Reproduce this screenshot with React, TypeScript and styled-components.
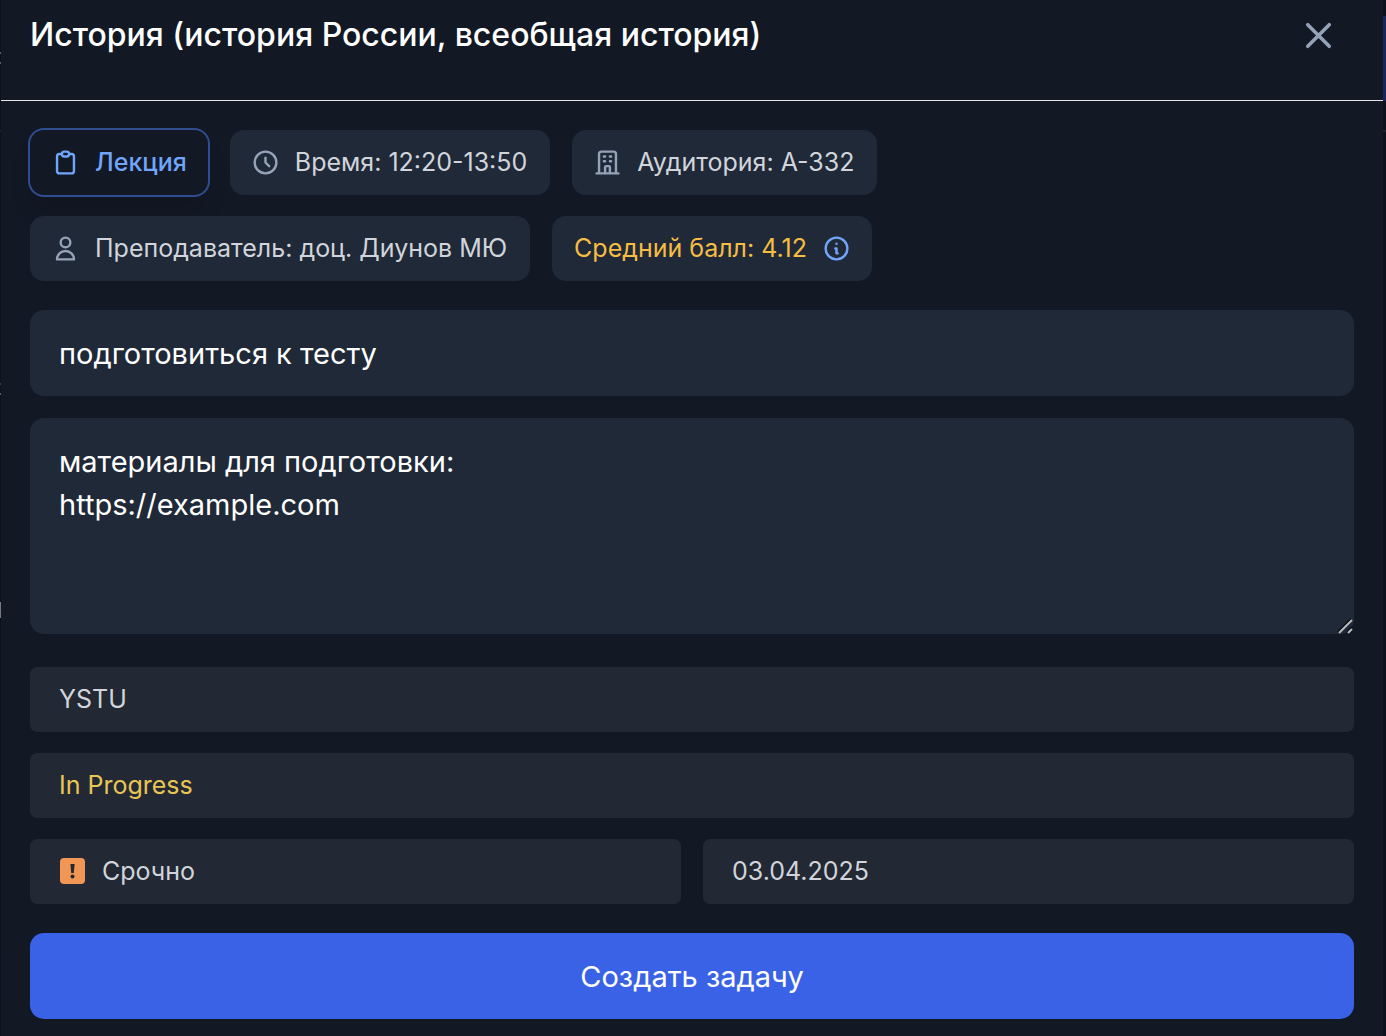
import React, { useState } from "react";
import styled, { createGlobalStyle } from "styled-components";

const GlobalStyle = createGlobalStyle`
  *, *::before, *::after { box-sizing: border-box; }
  body {
    margin: 0;
    background: #0d1119;
    color: #fff;
    font-family: Inter, "Liberation Sans", sans-serif;
  }
  button, input, textarea { font: inherit; }
`;

const Page = styled.div`
  position: relative;
  min-height: 100vh;
  padding: 0 3px 0 1px;
  display: flex;
  overflow: hidden;
`;

const Behind = styled.span<{ $top: number; $height: number; $color: string; $side: "left" | "right" }>`
  position: absolute;
  top: ${(p) => p.$top}px;
  ${(p) => p.$side}: 0;
  width: ${(p) => (p.$side === "left" ? 1 : 3)}px;
  height: ${(p) => p.$height}px;
  background: ${(p) => p.$color};
`;

const Modal = styled.section`
  flex: 1;
  min-width: 0;
  background: #121824;
`;

const Header = styled.header`
  display: flex;
  align-items: flex-start;
  justify-content: space-between;
  padding: 14px 43px 43px 29px;
  border-bottom: 1px solid #e5e7eb;
`;

const Title = styled.h1`
  margin: 0;
  font-size: 32px;
  line-height: 42px;
  font-weight: 500;
`;

const CloseButton = styled.button`
  display: flex;
  padding: 0;
  border: 0;
  background: none;
  color: #94a3b8;
  cursor: pointer;
`;

const Body = styled.form`
  display: flex;
  flex-direction: column;
  padding: 29px 29px 17px;
`;

const Tags = styled.div`
  display: flex;
  flex-wrap: wrap;
  gap: 21px 22px;
  margin-bottom: 29px;
`;

const Tag = styled.div<{ $tone?: "rating" }>`
  display: flex;
  align-items: center;
  gap: 15px;
  height: 65px;
  padding: ${(p) => (p.$tone === "rating" ? "0 21px 1px 22px" : "0 23px 1px 21px")};
  border-radius: 14px;
  background: #202938;
  color: ${(p) => (p.$tone === "rating" ? "#f6bd45" : "#d1d5db")};
  font-size: 25px;
  line-height: 36px;
`;

const KindTag = styled(Tag)`
  padding: 0 21px 1px;
  background: #121824;
  color: #70a5fa;
  font-weight: 500;
  box-shadow: 0 0 0 2px #2f4d91, 0 18px 27px -5px rgba(0, 0, 0, 0.12);
`;

const InfoButton = styled(CloseButton)`
  color: #70a5fa;
`;

const TagIcon = styled.span`
  display: flex;
  color: #94a3b8;
  ${KindTag} & { color: #70a5fa; }
`;

const TextInput = styled.input`
  width: 100%;
  height: 86px;
  margin-bottom: 22px;
  padding: 0 29px;
  border: 0;
  border-radius: 14px;
  outline: 0;
  background: #202938;
  color: #fff;
  font-size: 29px;
`;

const TextArea = styled.textarea`
  display: block;
  width: 100%;
  height: 216px;
  padding: 22px 29px;
  border: 0;
  border-radius: 14px;
  outline: 0;
  background: #202938;
  color: #fff;
  font-size: 29px;
  line-height: 43px;
  resize: none;
`;

const AreaWrap = styled.div`
  position: relative;
  margin-bottom: 33px;
`;

const Grip = styled.svg`
  position: absolute;
  right: 0;
  bottom: 0;
  cursor: ns-resize;
`;

const Fields = styled.div`
  display: grid;
  grid-template-columns: 1fr 1fr;
  gap: 21px 22px;
  margin-bottom: 29px;
`;

const Field = styled.button<{ $wide?: boolean; $color?: string }>`
  display: flex;
  align-items: center;
  gap: 16px;
  grid-column: ${(p) => (p.$wide ? "1 / -1" : "auto")};
  height: 65px;
  padding: 0 29px 1px;
  border: 0;
  border-radius: 7px;
  background: #222834;
  color: ${(p) => p.$color ?? "#d1d5db"};
  font-size: 25px;
  line-height: 36px;
  text-align: left;
  cursor: pointer;
`;

const Submit = styled.button`
  height: 86px;
  border: 0;
  border-radius: 14px;
  background: #3962e6;
  color: #fff;
  font-size: 29px;
  line-height: 43px;
  cursor: pointer;
`;

const paths = {
  clipboard:
    "M9 5H7a2 2 0 00-2 2v12a2 2 0 002 2h10a2 2 0 002-2V7a2 2 0 00-2-2h-2M9 5a2 2 0 002 2h2a2 2 0 002-2M9 5a2 2 0 012-2h2a2 2 0 012 2",
  clock: "M12 8v4l3 3m6-3a9 9 0 11-18 0 9 9 0 0118 0z",
  building:
    "M19 21V5a2 2 0 00-2-2H7a2 2 0 00-2 2v16m14 0h2m-2 0h-5m-9 0H3m2 0h5M9 7h1m-1 4h1m4-4h1m-1 4h1m-5 10v-5a1 1 0 011-1h2a1 1 0 011 1v5m-4 0h4",
  user: "M16 7a4 4 0 11-8 0 4 4 0 018 0zM12 14a7 7 0 00-7 7h14a7 7 0 00-7-7z",
  info: "M13 16h-1v-4h-1m1-4h.01M21 12a9 9 0 11-18 0 9 9 0 0118 0z",
  close: "M6 18L18 6M6 6l12 12",
};

function Icon({ name, size = 29 }: { name: keyof typeof paths; size?: number }) {
  return (
    <svg
      width={size}
      height={size}
      viewBox="0 0 24 24"
      fill="none"
      stroke="currentColor"
      strokeWidth={2}
      strokeLinecap="round"
      strokeLinejoin="round"
      aria-hidden="true"
    >
      <path d={paths[name]} />
    </svg>
  );
}

const details: { icon: keyof typeof paths; text: string }[] = [
  { icon: "clock", text: "Время: 12:20-13:50" },
  { icon: "building", text: "Аудитория: А-332" },
  { icon: "user", text: "Преподаватель: доц. Диунов МЮ" },
];

export default function App() {
  const [name, setName] = useState("подготовиться к тесту");
  const [notes, setNotes] = useState("материалы для подготовки:\nhttps://example.com");

  return (
    <>
      <GlobalStyle />
      <Page>
        <Behind $side="right" $top={16} $height={85} $color="#172560" />
        <Behind $side="right" $top={130} $height={2} $color="#1a2333" />
        <Behind $side="left" $top={52} $height={2} $color="#5c6067" />
        <Behind $side="left" $top={62} $height={2} $color="#5c6067" />
        <Behind $side="left" $top={130} $height={2} $color="#17243f" />
        <Behind $side="left" $top={383} $height={2} $color="#3d4148" />
        <Behind $side="left" $top={393} $height={2} $color="#5c6067" />
        <Behind $side="left" $top={602} $height={16} $color="#777a80" />
        <Modal aria-labelledby="lesson-title">
          <Header>
            <Title id="lesson-title">История (история России, всеобщая история)</Title>
            <CloseButton type="button" aria-label="Закрыть">
              <Icon name="close" size={43} />
            </CloseButton>
          </Header>
          <Body onSubmit={(e) => e.preventDefault()}>
            <Tags>
              <KindTag>
                <TagIcon><Icon name="clipboard" /></TagIcon>
                Лекция
              </KindTag>
              {details.map((d) => (
                <Tag key={d.icon}>
                  <TagIcon><Icon name={d.icon} /></TagIcon>
                  {d.text}
                </Tag>
              ))}
              <Tag $tone="rating">
                Средний балл: 4.12
                <InfoButton type="button" aria-label="Подробнее о среднем балле">
                  <Icon name="info" />
                </InfoButton>
              </Tag>
            </Tags>
            <TextInput
              aria-label="Название задачи"
              value={name}
              onChange={(e) => setName(e.target.value)}
            />
            <AreaWrap>
              <TextArea
                aria-label="Описание задачи"
                value={notes}
                onChange={(e) => setNotes(e.target.value)}
              />
              <Grip width="17" height="17" viewBox="0 0 17 17" fill="none" aria-hidden="true">
                <path d="M1 15L14 2M10 15L15 10" stroke="#0b0f17" strokeWidth="2" />
                <path d="M2 16L15 3M11 16L15 12" stroke="#b6b9be" strokeWidth="2" />
              </Grip>
            </AreaWrap>
            <Fields>
              <Field type="button" $wide>YSTU</Field>
              <Field type="button" $wide $color="#e8c653">In Progress</Field>
              <Field type="button">
                <svg width="27" height="26" viewBox="0 0 27 26" aria-hidden="true">
                  <rect x="1" width="25" height="26" rx="4" fill="#f29655" />
                  <path d="M11.4 6h4.2l-.8 9h-2.6z" fill="#26282f" />
                  <circle cx="13.5" cy="18.5" r="2" fill="#26282f" />
                </svg>
                Срочно
              </Field>
              <Field type="button">03.04.2025</Field>
            </Fields>
            <Submit type="submit">Создать задачу</Submit>
          </Body>
        </Modal>
      </Page>
    </>
  );
}
